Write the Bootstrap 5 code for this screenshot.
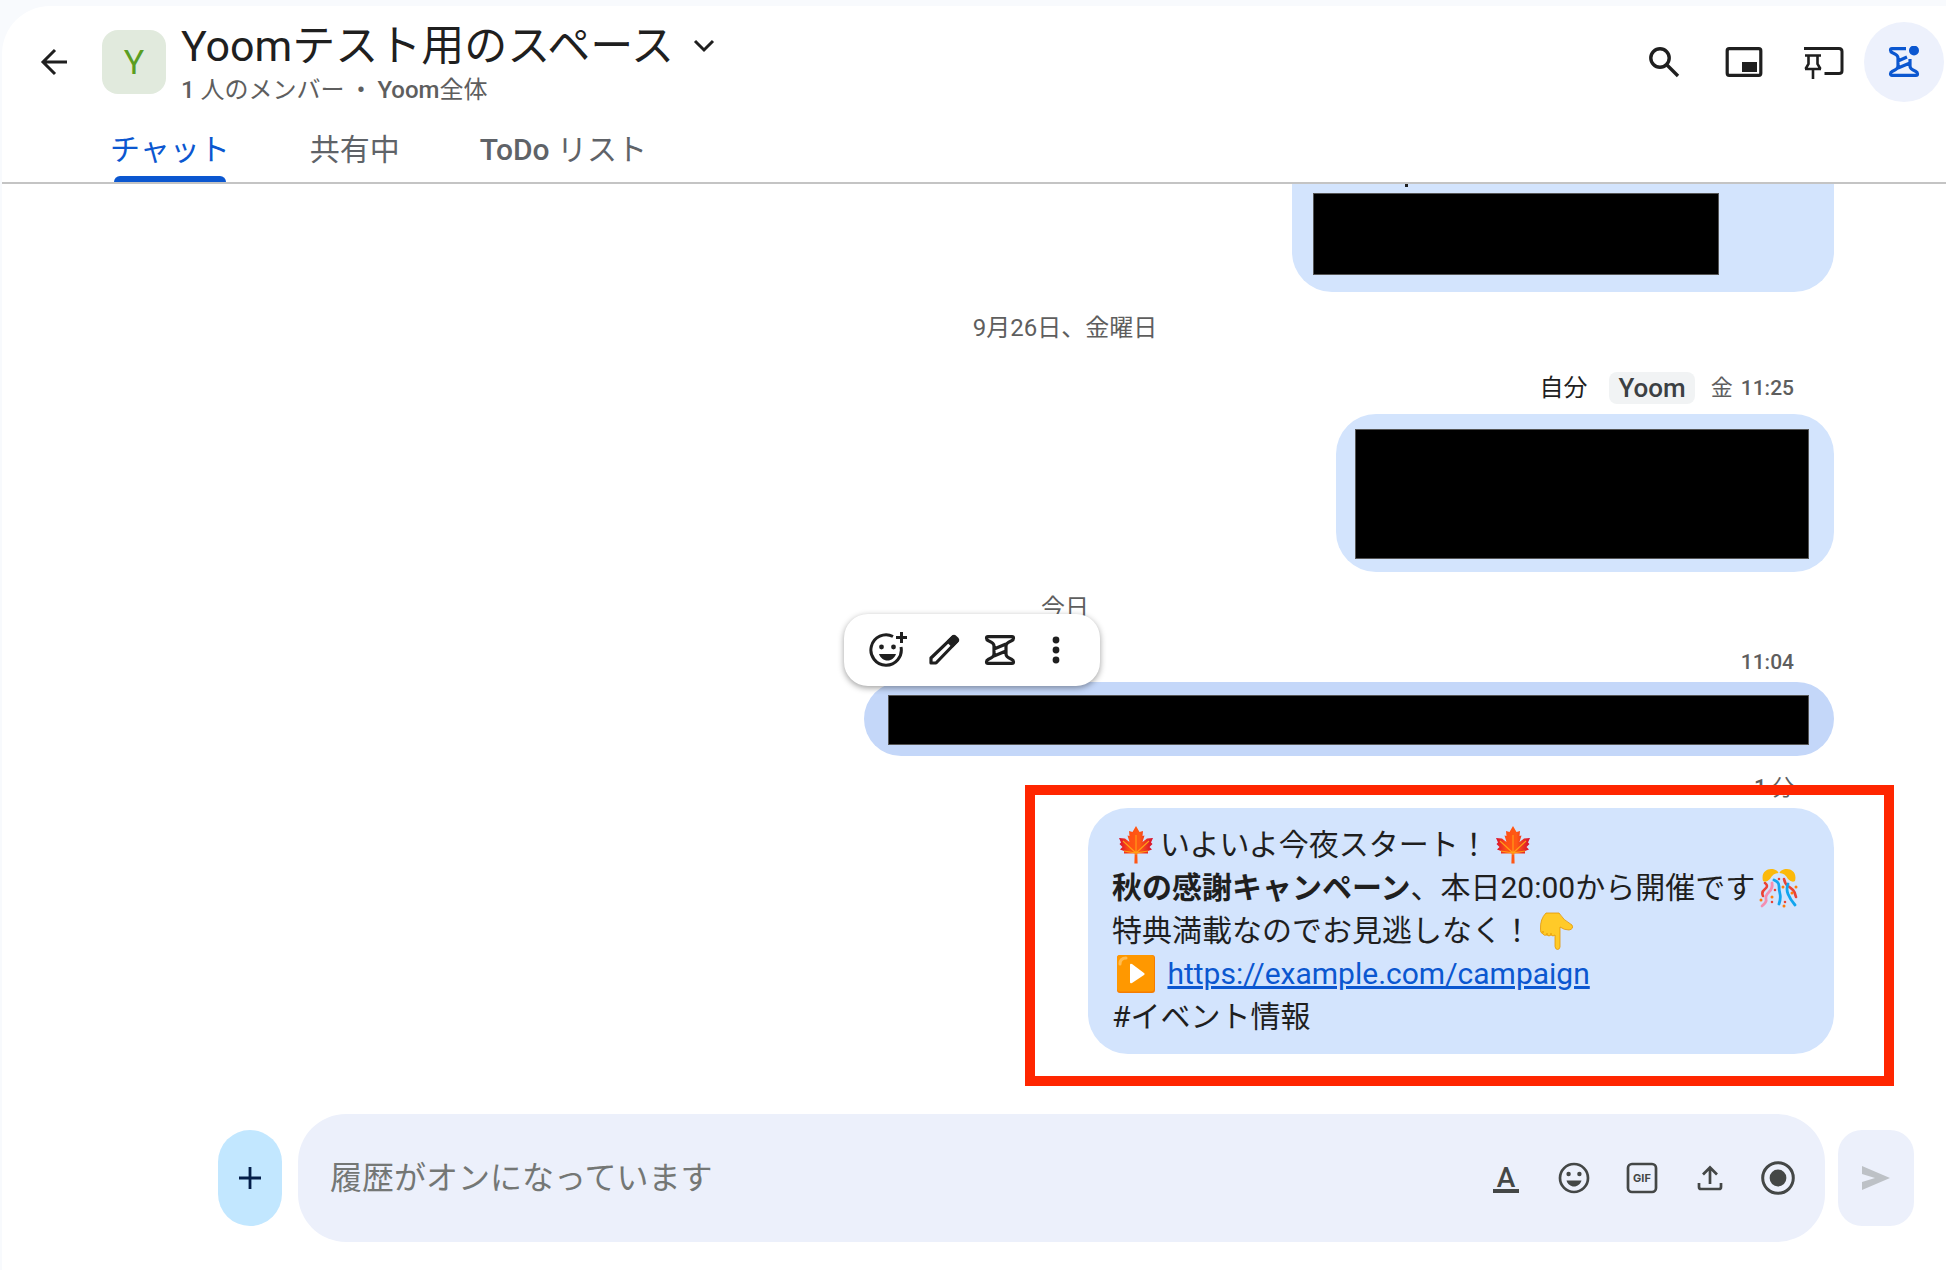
<!DOCTYPE html>
<html lang="ja">
<head>
<meta charset="utf-8">
<meta name="viewport" content="width=device-width, initial-scale=1">
<title>Yoomテスト用のスペース</title>
<link href="https://cdn.jsdelivr.net/npm/bootstrap@5.3.0/dist/css/bootstrap.min.css" rel="stylesheet">
<style>
  body { background: #f8fafd; font-family: Roboto, "Noto Sans CJK JP", sans-serif; color: #1f1f1f; }
  .panel { min-height: calc(100vh - 6px); margin: 6px 0 0 2px; border-top-left-radius: 48px; }
  .space-head { border-bottom: 2px solid #c4c4c4; padding-top: 16px; }
  .top-row { height: 84px; padding: 0 2px 0 28px; }
  .plain { background: none; border: 0; padding: 0; color: inherit; display: flex; align-items: center; justify-content: center; }
  .back-btn { width: 48px; height: 80px; }
  .avatar { width: 64px; height: 64px; margin: 8px 15px 0 24px; border-radius: 16px; background: #e1eadd; color: #5a9e22; font-size: 34px; }
  .space-title { font-size: 43px; line-height: 48px; }
  .space-sub { font-size: 24px; line-height: 34px; margin-top: 3px; color: #5e5e5e; font-weight: 500; }
  .cjk { font-weight: 400; }
  .tool-btn { width: 80px; height: 80px; }
  .tool-btn.on { background: #edf1fc; color: #0b57d0; }
  .tabs { height: 76px; gap: 80px; padding-left: 108px; }
  .tabs a { position: relative; padding-top: 27px; font-size: 30px; line-height: 34px; color: #5f6368; text-decoration: none; font-weight: 500; }
  .tabs a.cjk { font-weight: 400; }
  .tabs a.active { color: #0b57d0; }
  .tabs a.active::after { content: ""; position: absolute; left: 4px; right: 4px; bottom: 0; height: 6px; background: #0b57d0; border-radius: 6px 6px 0 0; }
  .stream { margin: 0 112px 0 294px; }
  .bubble { background: #d3e4fd; border-radius: 40px; }
  .bubble.cut { width: 542px; border-top-left-radius: 0; border-top-right-radius: 0; padding: 0 0 17px 21px; }
  .tail { width: 3px; height: 3px; margin: 0 0 6px 92px; background: #1f1f1f; }
  .redact { background: #000; border: 1px solid #555; }
  .r1 { width: 406px; height: 82px; }
  .r2 { width: 454px; height: 130px; }
  .r3 { height: 50px; }
  .bubble.b2 { margin-top: 10px; padding: 15px 25px 13px 19px; }
  .bubble.b3 { width: 970px; margin-top: 4px; background: #c4d7f9; padding: 13px 25px 11px 24px; }
  .bubble.b4 { width: 746px; margin-top: 4px; padding: 15px 24px 16px; font-size: 30px; line-height: 43px; }
  .bubble.b4 p { white-space: nowrap; }
  .bubble.b4 a { color: #0b57d0; }
  .day { margin-top: 20px; font-size: 24px; line-height: 32px; color: #5e5e5e; }
  .meta-line { padding-right: 40px; font-size: 22px; line-height: 32px; color: #5e5e5e; font-weight: 500; }
  .meta-line.first { margin-top: 28px; }
  .meta-line.mid { margin-top: 22px; }
  .meta-line.last { margin-top: 16px; }
  .who { font-size: 24px; color: #1f1f1f; margin-right: 22px; }
  .app-chip { background: #f1f3f4; color: #3c4043; font-size: 26px; padding: 0 9px; border-radius: 8px; margin-right: 16px; }
  .clock { font-size: 21px; }
  .hover-bar { position: absolute; left: -20px; top: -68px; height: 72px; width: 256px; padding-left: 16px; background: #fff; border-radius: 24px; box-shadow: 0 2px 6px rgba(0,0,0,.38); }
  .hover-bar button { width: 56px; height: 72px; }
  .marker { position: absolute; left: -63px; top: -23px; right: -60px; bottom: -32px; border: 10px solid #ff2600; pointer-events: none; }
  .emo { width: 38px; height: 38px; vertical-align: -9px; margin: 0 5px; overflow: visible; }
  .composer { padding: 0 32px 28px 216px; }
  .plus-btn { width: 64px; height: 96px; border-radius: 32px; background: #c2e7ff; margin-right: 16px; }
  .field { height: 128px; border-radius: 48px; background: #ecf0fb; padding: 0 13px 0 32px; color: #444746; }
  .field input { font-size: 32px; line-height: 40px; border: 0; background: none; outline: 0; min-width: 0; padding: 0; }
  .field input::placeholder { color: #747775; opacity: 1; }
  .field button { width: 68px; height: 68px; }
  .send-btn { width: 76px; height: 96px; border-radius: 24px; background: #ecf0fb; margin-left: 13px; color: #bdc1c6; }
  .gif-label { font: bold 11px Inter, sans-serif; }
  .a-label { font: 500 28px/28px Roboto, sans-serif; height: 25px; }
  .a-bar { width: 26px; height: 4px; background: currentColor; }
</style>
</head>
<body>
<svg width="0" height="0" class="position-absolute" aria-hidden="true">
  <symbol id="leaf" viewBox="0 0 38 38">
    <linearGradient id="lg" x1="0" x2="1"><stop offset="0" stop-color="#d81030"/><stop offset=".3" stop-color="#ff4f14"/><stop offset=".6" stop-color="#ff5a14"/><stop offset="1" stop-color="#d40c30"/></linearGradient>
    <path fill="url(#lg)" d="M19 0L22.500 6 26 5 25.500 10 27.500 9.500 25.500 16 30 12.500 36 12 34 16.500 35.500 18 32.500 21 35 23.500 31 25 31 27.500 20.300 27.500 20.600 37.500H17.400L17.700 27.500 7 27.500 7 25 3 23.500 5.500 21 2.500 18 4 16.500 2 12 8 12.500 12.500 16 10.500 9.500 12.500 10 12 5 15.500 6z"/>
    <path fill="none" stroke="#ffa018" stroke-width="1.100" d="M19 9v20M19 27L6 15M19 27L32 15M19 27L7 25M19 27l12-2"/>
  </symbol>
  <symbol id="spool" viewBox="0 0 32 32">
    <path fill="none" stroke="currentColor" stroke-width="3.200" stroke-linejoin="round" d="M4 2.600h24q1.500 0 1.500 1.600t-2 2.600Q22 9 22 12v8q0 3 5.500 5.200 2 1 2 2.600t-1.500 1.600H4q-1.500 0-1.500-1.600t2-2.600Q10 23 10 20v-8q0-3-5.500-5.200-2-1-2-2.600T4 2.600zM10 15l12-5M10 22l12-5"/>
  </symbol>
  <symbol id="smile" viewBox="0 0 32 32">
    <circle cx="16" cy="16" r="14" fill="none" stroke="currentColor" stroke-width="2.700"/>
    <circle cx="10.600" cy="12" r="2.200" fill="currentColor"/><circle cx="21.400" cy="12" r="2.200" fill="currentColor"/>
    <path fill="currentColor" d="M8.500 18.500h15c-1 3.500-4 6-7.500 6s-6.500-2.500-7.500-6z"/>
  </symbol>
</svg>

<div class="panel bg-white d-flex flex-column">
  <header class="space-head">
    <div class="top-row d-flex align-items-start">
      <button class="plain back-btn" type="button" aria-label="戻る">
        <svg width="28" height="28" viewBox="0 0 28 28" fill="none" stroke="currentColor" stroke-width="3"><path d="M27 14H3M15 2L3 14l12 12"/></svg>
      </button>
      <div class="avatar d-flex align-items-center justify-content-center">Y</div>
      <div class="flex-grow-1">
        <h1 class="space-title fw-normal m-0 d-flex align-items-center">Yoomテスト用のスペース
          <button class="plain ms-3" type="button" aria-label="スペースのメニュー"><svg width="28" height="20" viewBox="0 0 28 20" fill="none" stroke="currentColor" stroke-width="3"><path d="M5 5l9 9 9-9"/></svg></button>
        </h1>
        <div class="space-sub">1 <span class="cjk">人のメンバー</span>&ensp;•&ensp;Yoom<span class="cjk">全体</span></div>
      </div>
      <div class="d-flex">
        <button class="plain tool-btn" type="button" aria-label="検索"><svg width="32" height="32" viewBox="0 0 32 32" fill="none" stroke="currentColor" stroke-width="3.400"><circle cx="12" cy="12" r="9.200"/><path d="M18.500 18.500L30 30"/></svg></button>
        <button class="plain tool-btn" type="button" aria-label="小さい画面"><svg width="38" height="32" viewBox="0 0 38 32"><rect x="2.200" y="2.700" width="33.600" height="26.600" rx="2" fill="none" stroke="currentColor" stroke-width="3.200"/><path fill="currentColor" d="M17 16h15v10H17z"/></svg></button>
        <button class="plain tool-btn" type="button" aria-label="固定"><svg width="40" height="36" viewBox="0 0 40 36" fill="none" stroke="currentColor" stroke-width="3"><path d="M1 6V4.500h34q3 0 3 3V27q0 2.500-3 2.500H20.500"/><path stroke-width="2.600" d="M1 11.500h16M1 25h16M9 25v10M4.500 12v8L1.500 25M13.500 12v8l3 5"/></svg></button>
        <button class="plain tool-btn on rounded-circle" type="button" aria-label="スレッド"><svg width="32" height="32" viewBox="0 0 32 32"><path fill="none" stroke="currentColor" stroke-width="3.200" stroke-linejoin="round" d="M18 2.600H4q-1.500 0-1.500 1.600t2 2.600Q10 9 10 12v8q0 3-5.500 5.200-2 1-2 2.600T4 29.400h24q1.500 0 1.500-1.600t-2-2.600Q22 23 22 20v-7M10 15l9-4M10 22l12-5"/><circle cx="26" cy="4.500" r="5" fill="currentColor"/></svg></button>
      </div>
    </div>
    <nav class="tabs d-flex" aria-label="スペースのタブ">
      <a class="active cjk" href="#chat" aria-current="page">チャット</a>
      <a class="cjk" href="#shared">共有中</a>
      <a href="#todo">ToDo <span class="cjk">リスト</span></a>
    </nav>
  </header>

  <main class="stream d-flex flex-column align-items-end">
    <div class="bubble cut"><div class="tail"></div><div class="redact r1"></div></div>
    <div class="day align-self-center">9月26日、金曜日</div>
    <div class="meta-line first d-flex"><span class="who cjk">自分</span><span class="app-chip">Yoom</span><span class="cjk">金</span><span class="clock ms-2">11:25</span></div>
    <div class="bubble b2"><div class="redact r2"></div></div>
    <div class="day align-self-center">今日</div>
    <div class="meta-line mid clock">11:04</div>
    <div class="bubble b3 position-relative">
      <div class="redact r3"></div>
      <div class="hover-bar d-flex" role="toolbar" aria-label="メッセージの操作">
        <button class="plain" type="button" aria-label="リアクションを追加"><svg width="38" height="38" viewBox="0 0 38 38"><path fill="none" stroke="currentColor" stroke-width="3" d="M24 5.500A15.200 15.200 0 1 0 32 16"/><circle cx="12.500" cy="16" r="2.400" fill="currentColor"/><circle cx="24.500" cy="16" r="2.400" fill="currentColor"/><path fill="currentColor" d="M10 23h17c-1.500 4-4.500 6.500-8.500 6.500S11.500 27 10 23z"/><path stroke="currentColor" stroke-width="3" d="M32.500 1v11M27 6.500h11"/></svg></button>
        <button class="plain" type="button" aria-label="編集"><svg width="32" height="32" viewBox="0 0 32 32" fill="none" stroke="currentColor" stroke-width="3.200" stroke-linejoin="round"><path d="M3 29v-5L25 2.800q1-.8 2 0l2.200 2.200q.8 1 0 2L8 29z"/><path fill="currentColor" d="M20.500 7.500L25 3l4 4-4.500 4.500z"/></svg></button>
        <button class="plain" type="button" aria-label="スレッドで返信"><svg width="32" height="32"><use href="#spool"/></svg></button>
        <button class="plain" type="button" aria-label="その他"><svg width="8" height="28" viewBox="0 0 8 28" fill="currentColor"><circle cx="4" cy="4" r="3.400"/><circle cx="4" cy="14" r="3.400"/><circle cx="4" cy="24" r="3.400"/></svg></button>
      </div>
    </div>
    <div class="meta-line last">1 <span class="cjk">分</span></div>
    <div class="bubble b4 position-relative">
      <p class="m-0"><svg class="emo" role="img" aria-label="紅葉"><use href="#leaf"/></svg>いよいよ今夜スタート！<svg class="emo" role="img" aria-label="紅葉"><use href="#leaf"/></svg></p>
      <p class="m-0"><b>秋の感謝キャンペーン</b>、本日20:00から開催です<svg class="emo" role="img" aria-label="くす玉" viewBox="0 0 38 38" fill="none" stroke-linecap="round"><path stroke="#ea4335" stroke-width="2.600" d="M5 14q4 3 0 6t-2 7M24 10q1 5 4 7t5 4 3 7"/><path stroke="#f48fb1" stroke-width="2.800" d="M12 14q1 5-3 9t-3 7-4 7"/><path stroke="#12a5ee" stroke-width="2.800" d="M14 11q5 2 5 6t1 8-1 10M28 15q-2 5 0 10t7 11"/><path fill="#fbb90b" d="M3 12C1 4 6 0 11 0c4 0 7 2 7.500 4Q13 4 10 10q-4 4-7 2zM35 12c2-8-3-12-8-12-4 0-7 2-7.500 4Q25 4 28 10q4 4 7 2z"/><g stroke="#ff7d0a" stroke-width="3"><path d="M12 28h0M36 18h0M24 37h0M1 31h0M32 24h0M23 18h0"/></g><path stroke="#ea4335" stroke-width="2.600" d="M19 10h0M25 33h0M15 21h0M12 33h0"/></svg></p>
      <p class="m-0">特典満載なのでお見逃しなく！<svg class="emo" role="img" aria-label="下を指す手" viewBox="0 0 38 38"><path fill="#ffca28" stroke="#e59600" stroke-width=".8" d="M9 1h13q4 7 13 12 2 4-3 5-5 0-9-3v20q-.5 2.500-2.500 2.500T18 34.500V23q-2 2-4 0-2 2-4 0-3 1-4-1-3-1-2.500-5Q3 7 9 1z"/><path fill="none" stroke="#e59600" stroke-width="1" d="M14 23v-2M10 23v-2M6 21v-2"/></svg></p>
      <p class="m-0"><svg class="emo" role="img" aria-label="再生" viewBox="0 0 38 38"><rect width="38" height="38" rx="3" fill="#f57c00"/><rect width="37" height="36.500" rx="3" fill="#ff9800"/><path d="M3 9q0-6 6-6" fill="none" stroke="#ffbd52" stroke-width="3" stroke-linecap="round"/><path fill="#fff" d="M13 10q0-2 2-1l12 9q1.500 1 0 2l-12 8q-2 1-2-1z"/></svg> <a href="https://example.com/campaign">https://example.com/campaign</a></p>
      <p class="m-0">#イベント情報</p>
      <div class="marker"></div>
    </div>
  </main>

  <form class="composer d-flex align-items-center mt-auto" onsubmit="return false">
    <button class="plain plus-btn flex-shrink-0" type="button" aria-label="追加"><svg width="22" height="22" viewBox="0 0 22 22" stroke="#041e49" stroke-width="2.800"><path d="M11 0v22M0 11h22"/></svg></button>
    <div class="field d-flex align-items-center flex-grow-1">
      <input class="flex-grow-1" type="text" aria-label="メッセージ" placeholder="履歴がオンになっています">
      <button class="plain flex-column" type="button" aria-label="書式"><span class="a-label">A</span><span class="a-bar"></span></button>
      <button class="plain" type="button" aria-label="絵文字"><svg width="32" height="32"><use href="#smile"/></svg></button>
      <button class="plain" type="button" aria-label="GIF"><svg width="32" height="32" viewBox="0 0 32 32"><rect x="2" y="2" width="28" height="28" rx="4" fill="none" stroke="currentColor" stroke-width="2.700"/><text class="gif-label" x="16" y="20" text-anchor="middle" fill="currentColor">GIF</text></svg></button>
      <button class="plain" type="button" aria-label="アップロード"><svg width="26" height="26" viewBox="0 0 26 26" fill="none" stroke="currentColor" stroke-width="2.700"><path d="M13 19V3M6 9.500l7-7 7 7M2 18v4q0 2 2 2h18q2 0 2-2v-4"/></svg></button>
      <button class="plain" type="button" aria-label="録画"><svg width="34" height="34" viewBox="0 0 34 34"><circle cx="17" cy="17" r="15.300" fill="none" stroke="currentColor" stroke-width="3"/><circle cx="17" cy="17" r="8.400" fill="currentColor"/></svg></button>
    </div>
    <button class="plain send-btn flex-shrink-0" type="submit" aria-label="送信"><svg width="28" height="24" viewBox="0 0 28 24" fill="currentColor"><path d="M0 0l28 12L0 24v-8l13-4L0 8z"/></svg></button>
  </form>
</div>
<script src="https://cdn.jsdelivr.net/npm/bootstrap@5.3.0/dist/js/bootstrap.bundle.min.js"></script>
</body>
</html>
